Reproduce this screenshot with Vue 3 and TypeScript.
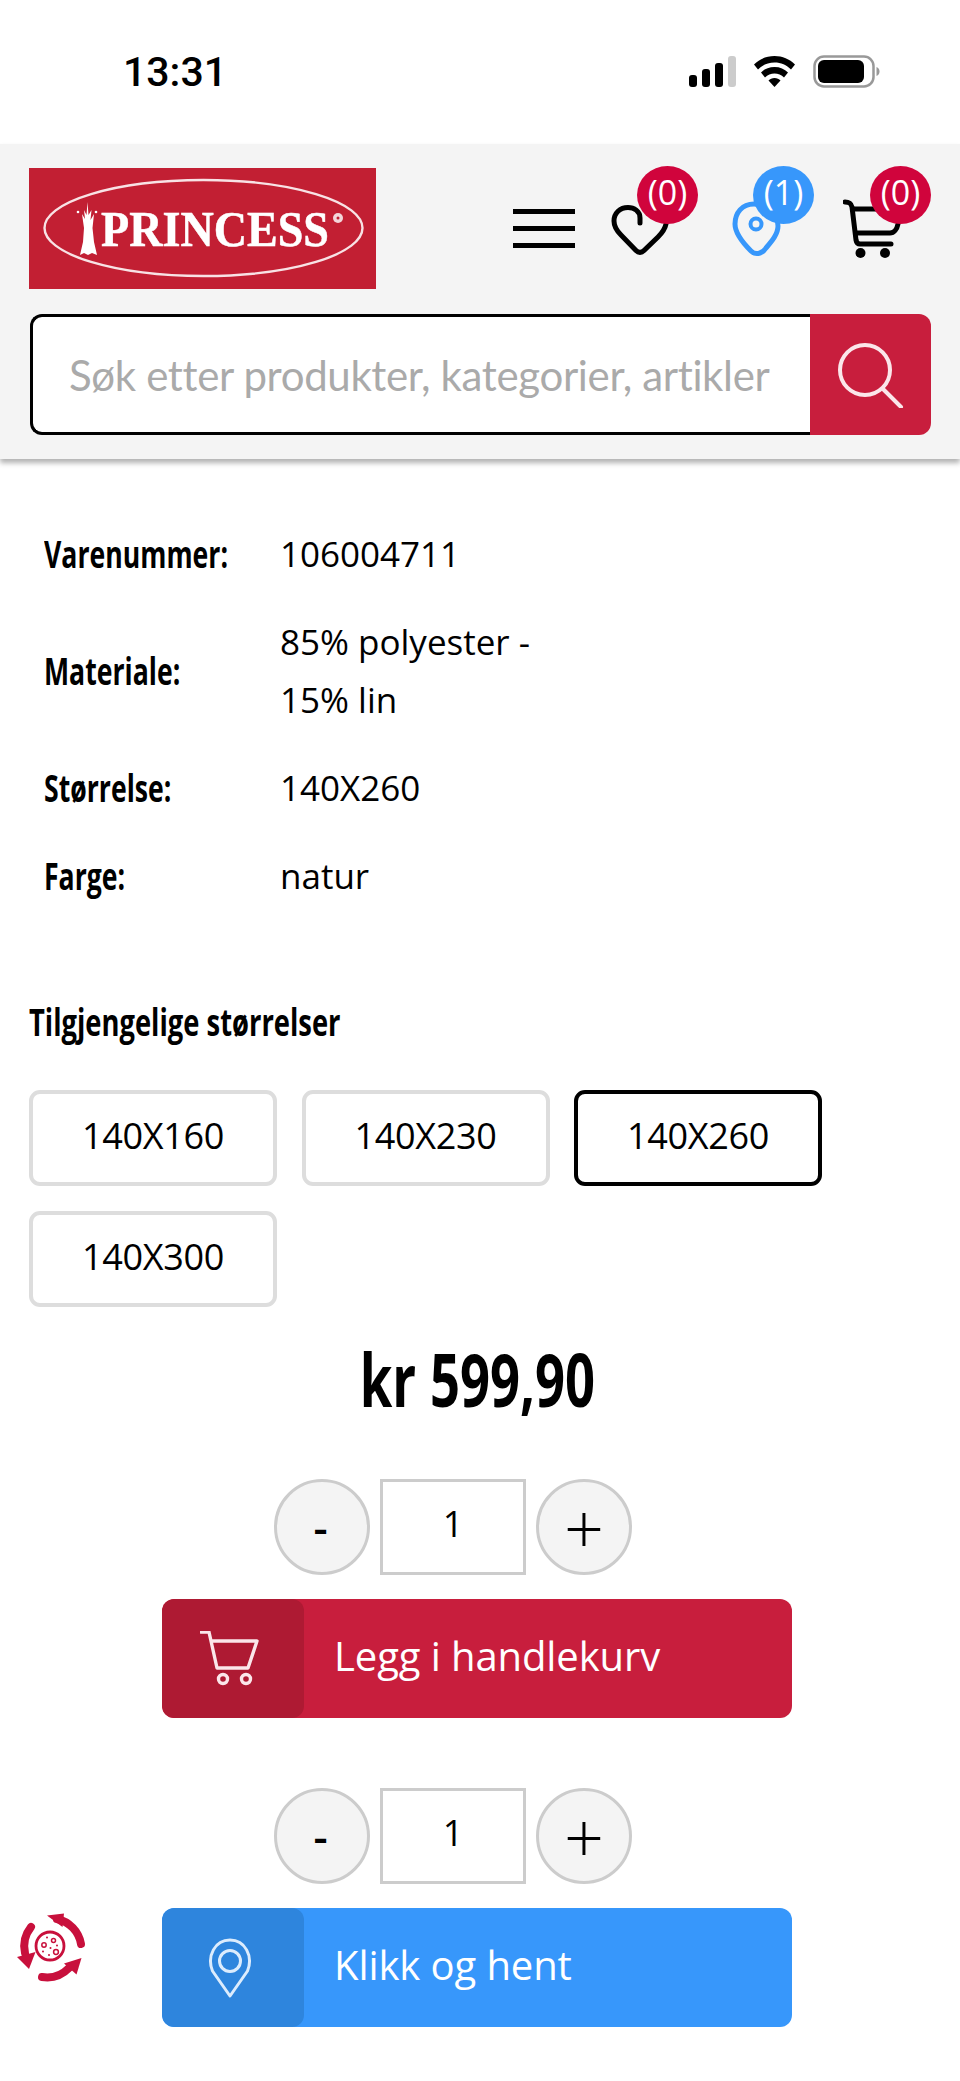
<script setup lang="ts">
const rows = [
  { label: 'Varenummer:', lines: ['106004711'] },
  { label: 'Materiale:', lines: ['85% polyester -', '15% lin'] },
  { label: 'Størrelse:', lines: ['140X260'] },
  { label: 'Farge:', lines: ['natur'] },
]
const sizes = ['140X160', '140X230', '140X260', '140X300']
const selected = '140X260'
</script>

<template>
  <div class="page">
    <div class="status">
      <span class="time">13:31</span>
      <div class="status-icons">
        <svg class="signal" width="47" height="31" viewBox="0 0 47 31">
          <rect x="0" y="19" width="8" height="12" rx="3" fill="#000" />
          <rect x="13" y="13" width="8" height="18" rx="3" fill="#000" />
          <rect x="26" y="7" width="8" height="24" rx="3" fill="#000" />
          <rect x="39" y="0" width="8" height="31" rx="3" fill="#ccc" />
        </svg>
        <svg class="wifi" width="41" height="31" viewBox="0 0 41 31">
          <path d="M20.5 0C12.5 0 5.5 3 0 8.5l4 5C8.5 9 14 6.5 20.5 6.5S32.5 9 37 13.500l4-5C35.500 3 28.500 0 20.500 0z" fill="#000" />
          <path d="M20.500 11C15 11 10.500 13 7 16.500l4 5c2.500-2.500 6-4 9.500-4s7 1.500 9.500 4l4-5C30.500 13 26 11 20.500 11z" fill="#000" />
          <path d="M20.500 22c-2.500 0-4.500 1-6 2.500l6 6.500 6-6.500c-1.500-1.500-3.500-2.500-6-2.500z" fill="#000" />
        </svg>
        <svg class="battery" width="67" height="33" viewBox="0 0 67 33">
          <rect x="1.500" y="1.500" width="59" height="30" rx="9.500" fill="none" stroke="#999" stroke-width="2.500" />
          <rect x="5" y="5" width="46" height="23" rx="6" fill="#000" />
          <path d="M63.500 12c2 .5 3 2.500 3 4.500s-1 4-3 4.500z" fill="#999" />
        </svg>
      </div>
    </div>

    <header class="header">
      <div class="top">
        <svg class="logo" width="347" height="121" viewBox="0 0 347 121">
          <rect width="347" height="121" fill="#c21f33" />
          <ellipse cx="174.500" cy="60" rx="159" ry="48" fill="none" stroke="#f8e2e5" stroke-width="2.400" />
          <path d="M58.500 34L59.500 47L62.500 42L61.500 52L65 46L63.500 60L65 74L68 87L63 85L59 87L55 85L51 87L54 74L55 60L53 46L56 51L55 42L57.500 47Z" fill="#fff" />
          <circle cx="49" cy="44" r="1.300" fill="#fff" />
          <circle cx="67" cy="44" r="1.300" fill="#fff" />
          <text x="72" y="78" class="logo-text" textLength="228" lengthAdjust="spacingAndGlyphs">PRINCESS</text>
          <circle cx="309" cy="50" r="5" fill="#f3d6da" />
          <circle cx="309" cy="50" r="1.500" fill="#c21f33" />
        </svg>
        <nav class="nav">
          <div class="menu"><span></span><span></span><span></span></div>
          <div class="item heart">
            <svg width="60" height="92" viewBox="0 0 60 92">
              <path d="M29 57V52C29 45 23 41.500 17 41.500C9 41.500 3 47 3 55C3 61 6 65 10 69L25 84.500C27.500 87 30.500 87 33 84.500L47 71C51 67 54 63 55 58" fill="none" stroke="#000" stroke-width="5" stroke-linecap="round" />
            </svg>
            <span class="badge red">(0)</span>
          </div>
          <div class="item pin">
            <svg width="50" height="92" viewBox="0 0 50 92">
              <path d="M3 58C3 47 10 38 22 38C34 38 46 48 46 60C46 68 40 75 34 82C31 87 24 90 19 85C12 78 3 68 3 58Z" fill="none" stroke="#3797fb" stroke-width="5" />
              <circle cx="24" cy="58" r="5.500" fill="none" stroke="#3797fb" stroke-width="4" />
            </svg>
            <span class="badge blue">(1)</span>
          </div>
          <div class="item cart">
            <svg width="60" height="92" viewBox="0 0 60 92">
              <path d="M2 36C6 36 8 37 9 41L13 74C13.500 77 15 78 17 78H48" fill="none" stroke="#000" stroke-width="5" stroke-linecap="round" />
              <path d="M10 43H50M13.500 67H47C51 67 54 63 55 58" fill="none" stroke="#000" stroke-width="5" stroke-linecap="round" />
              <circle cx="17.500" cy="87" r="5" fill="#000" />
              <circle cx="42" cy="87" r="5" fill="#000" />
            </svg>
            <span class="badge red">(0)</span>
          </div>
        </nav>
      </div>
      <div class="search">
        <div class="search-box"><span class="placeholder">Søk etter produkter, kategorier, artikler</span></div>
        <button class="search-btn">
          <svg width="66" height="66" viewBox="0 0 66 66">
            <circle cx="27" cy="28" r="25" fill="none" stroke="#fbe6ea" stroke-width="4" />
            <path d="M45 47L63 65" stroke="#fbe6ea" stroke-width="4" stroke-linecap="round" />
          </svg>
        </button>
      </div>
    </header>

    <main class="main">
      <div class="specs">
        <div v-for="row in rows" :key="row.label" class="spec">
          <div class="spec-label"><span class="cond">{{ row.label }}</span></div>
          <div class="spec-value">
            <div v-for="line in row.lines" :key="line">{{ line }}</div>
          </div>
        </div>
      </div>

      <h2 class="sizes-title"><span class="cond">Tilgjengelige størrelser</span></h2>
      <div class="sizes">
        <button v-for="s in sizes" :key="s" class="size" :class="{ active: s === selected }"><span class="size-text">{{ s }}</span></button>
      </div>

      <div class="price"><span class="cond">kr 599,90</span></div>

      <div class="qty">
        <button class="round"><span class="minus">-</span></button>
        <div class="qty-input">1</div>
        <button class="round"><span class="plus">+</span></button>
      </div>
      <button class="action red-btn">
        <span class="action-icon">
          <svg width="60" height="56" viewBox="0 0 60 56">
            <path d="M1 1H9L17 37H48L57 10H12" fill="none" stroke="#fbe6ea" stroke-width="3.400" stroke-linejoin="round" stroke-linecap="round" />
            <circle cx="23" cy="48" r="4.500" fill="none" stroke="#fbe6ea" stroke-width="3.400" />
            <circle cx="46" cy="48" r="4.500" fill="none" stroke="#fbe6ea" stroke-width="3.400" />
          </svg>
        </span>
        <span class="action-text">Legg i handlekurv</span>
      </button>

      <div class="qty second">
        <button class="round"><span class="minus">-</span></button>
        <div class="qty-input">1</div>
        <button class="round"><span class="plus">+</span></button>
      </div>
      <button class="action blue-btn">
        <span class="action-icon">
          <svg width="46" height="60" viewBox="0 0 46 60">
            <path d="M23 58L5.500 33C-.5 18 8 2 23 2C38 2 46.500 18 40.500 33Z" fill="none" stroke="#dcecfd" stroke-width="3" stroke-linejoin="round" />
            <circle cx="23" cy="23" r="10.500" fill="none" stroke="#dcecfd" stroke-width="3" />
          </svg>
        </span>
        <span class="action-text">Klikk og hent</span>
      </button>
    </main>

    <svg class="widget" width="80" height="80" viewBox="0 0 80 80">
      <g fill="none" stroke="#c8103c" stroke-width="8" stroke-linecap="round">
        <path d="M71 37A31 31 0 0 0 47 12" />
        <path d="M21 20A31 31 0 0 0 15 46" />
        <path d="M32 70A31 31 0 0 0 59 61" />
      </g>
      <g fill="#c8103c">
        <polygon points="37,8.500 54,6.500 52.500,20" />
        <polygon points="7,50 25.500,45 19,62" />
        <polygon points="54,56.500 71.500,51 66.500,67.500" />
      </g>
      <circle cx="40" cy="39" r="14" fill="none" stroke="#c8103c" stroke-width="2.800" />
      <g fill="none" stroke="#c8103c" stroke-width="1.500">
        <circle cx="34" cy="38" r="2.200" />
        <circle cx="43.500" cy="33.500" r="2" />
        <circle cx="46" cy="45" r="2.400" />
      </g>
      <g fill="#c8103c">
        <circle cx="37" cy="30.500" r="1" />
        <circle cx="40.500" cy="41" r="1" />
        <circle cx="33" cy="44.500" r="1" />
        <circle cx="39" cy="48" r="1" />
        <circle cx="47" cy="38.500" r="1" />
      </g>
    </svg>
  </div>
</template>

<style>
html, body { margin: 0; background: #fff; }
</style>

<style scoped>
.page {
  position: relative;
  width: 960px;
  height: 2081px;
  overflow: hidden;
  background: #fff;
  color: #000;
  font-family: "Open Sans", "Liberation Sans", sans-serif;
}
button { font-family: inherit; color: inherit; padding: 0; cursor: pointer; }

.status { height: 144px; display: flex; align-items: flex-start; }
.time { margin: 48px 0 0 123px; font: 500 41px/48px Roboto, sans-serif; }
.status-icons { margin: 55px 0 0 auto; padding-right: 80px; display: flex; align-items: flex-start; }
.signal { margin-top: 1px; }
.wifi { margin: 1px 0 0 18px; }
.battery { margin-left: 18px; }

.header {
  height: 315px;
  box-sizing: border-box;
  padding: 24px 29px 24px;
  background: #f4f4f4;
  box-shadow: 0 4px 5px rgba(0,0,0,.3);
  position: relative;
}
.top { display: flex; height: 121px; }
.logo { display: block; flex: none; }
.logo-text { font: 700 51px "Liberation Serif", serif; fill: #fff; stroke: #fff; stroke-width: .5px; }
.nav { display: flex; align-items: flex-start; margin-left: 137px; margin-top: -2px; }
.menu { width: 62px; height: 39px; margin-top: 43px; display: flex; flex-direction: column; justify-content: space-between; }
.menu span { height: 5px; background: #000; }
.item { position: relative; height: 92px; }
.item svg { display: block; }
.heart { width: 87px; margin-left: 36px; }
.pin { width: 82px; margin-left: 34px; }
.cart { width: 88px; margin-left: 29px; }
.badge {
  position: absolute;
  top: 0;
  right: 0;
  width: 61px;
  height: 58px;
  border-radius: 50%;
  color: #fff;
  font-size: 34px;
  font-weight: 400;
  line-height: 52px;
  text-align: center;
}
.badge.red { background: #d0043c; }
.badge.blue { background: #3797fb; }

.search { display: flex; margin-top: 25px; height: 121px; margin-left: 1px; }
.search-box {
  flex: 1;
  box-sizing: border-box;
  border: 3px solid #000;
  border-right: none;
  border-radius: 12px 0 0 12px;
  background: #fff;
  padding-left: 36px;
  display: flex;
  align-items: center;
  white-space: nowrap;
  overflow: hidden;
}
.placeholder {
  display: inline-block;
  font-family: Lato, sans-serif;
  font-size: 42px;
  letter-spacing: -.35px;
  color: #aaa;
}
.search-btn {
  width: 121px;
  border: none;
  border-radius: 0 12px 12px 0;
  background: #c81e3d;
  display: flex;
  align-items: center;
  justify-content: center;
}

.main { display: block; }
.cond { display: inline-block; font-weight: 700; white-space: nowrap; transform: scaleX(.72); transform-origin: left center; }
.specs { padding: 51px 0 0 44px; }
.spec { display: flex; align-items: center; padding: 15px 0; }
.spec-label { width: 236px; flex: none; font-size: 37px; line-height: 58px; }
.spec-value { font-size: 35px; line-height: 58px; }
.sizes-title { margin: 79px 0 0 29px; font-size: 38px; line-height: 44px; font-weight: 700; }
.sizes { display: flex; flex-wrap: wrap; gap: 25px 24.500px; margin: 47px 100px 0 29px; }
.size {
  width: 248px;
  height: 96px;
  box-sizing: border-box;
  border: 4px solid #ddd;
  border-radius: 11px;
  background: #fff;
  font-size: 36px;
  letter-spacing: -.3px;
}
.size-text { display: block; margin-bottom: 6px; }
.size.active { border-color: #000; }
.price { margin-top: 32px; height: 80px; text-align: center; font-size: 73px; line-height: 80px; margin-left: -6px; }
.price .cond { transform-origin: center; }
.qty { display: flex; margin: 60px 0 0 274px; height: 96px; }
.qty.second { margin-top: 70px; }
.round {
  width: 96px;
  height: 96px;
  box-sizing: border-box;
  border: 3px solid #ccc;
  border-radius: 50%;
  background: #f4f4f4;
  display: flex;
  align-items: center;
  justify-content: center;
}
.minus { font-size: 44px; font-weight: 600; line-height: 1; margin-right: 3px; }
.plus { font-size: 70px; font-weight: 300; line-height: 1; }
.qty-input {
  width: 146px;
  box-sizing: border-box;
  margin: 0 10px;
  border: 3px solid #ccc;
  background: #fff;
  text-align: center;
  font-size: 36px;
  line-height: 84px;
}
.action {
  display: flex;
  align-items: center;
  width: 630px;
  height: 119px;
  margin: 24px 0 0 162px;
  border: none;
  border-radius: 12px;
  color: #fff;
  overflow: hidden;
}
.red-btn { background: #c81e3d; }
.blue-btn { background: #3797fb; }
.action-icon {
  width: 142px;
  height: 100%;
  box-sizing: border-box;
  padding-right: 6px;
  display: flex;
  align-items: center;
  justify-content: center;
  border-radius: 12px;
  flex: none;
}
.red-btn .action-icon { background: #ae1a33; }
.blue-btn .action-icon { background: #2e85dd; }
.action-text { margin: 0 0 6px 30px; font-size: 40px; letter-spacing: -.1px; }
.widget { position: absolute; left: 10px; top: 1907px; }
</style>
